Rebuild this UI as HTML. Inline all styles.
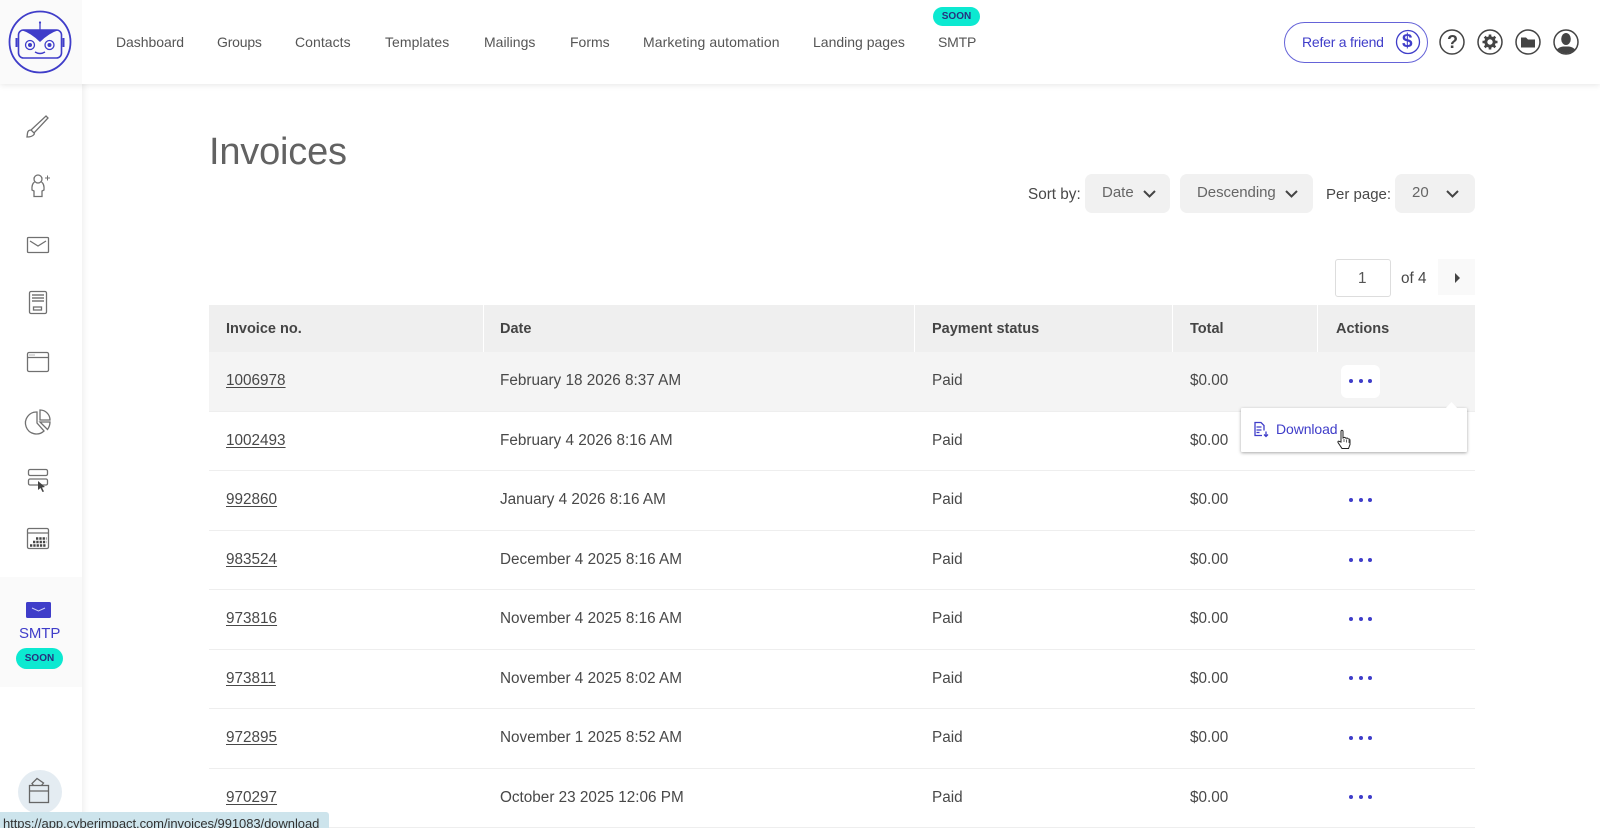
<!DOCTYPE html>
<html><head><meta charset="utf-8"><title>Invoices</title>
<style>
html,body{margin:0;padding:0;width:1600px;height:828px;overflow:hidden;background:#fff}
body{position:relative;font-family:"Liberation Sans",sans-serif;color:#444}
.t{position:absolute;white-space:nowrap;line-height:20px;font-size:15.3px;color:#484848}
.b{position:absolute}
.n{top:32px;font-size:14px;color:#555}
.h{top:319px;font-weight:bold;font-size:14.5px;color:#444}
.u{text-decoration:underline;text-underline-offset:2px}
.line{position:absolute;left:209px;width:1266px;height:1px;background:#eee}
.dots{position:absolute;left:1350px;width:20px;height:4px}
.dots i{position:absolute;top:0;width:4px;height:4px;border-radius:50%;background:#3f3dc9}
.dots i:nth-child(1){left:-1px}.dots i:nth-child(2){left:9px}.dots i:nth-child(3){left:18px}
.sel{position:absolute;top:174px;height:39px;background:#f1f1f1;border-radius:7px}
svg{position:absolute;overflow:visible}
.soon{position:absolute;background:#0ce9d1;border-radius:11px;color:#27307f;font-weight:bold;font-size:10px;text-align:center}
</style></head><body>

<!-- sidebar -->
<div class="b" style="left:0;top:0;width:82px;height:828px;background:#fff;box-shadow:2px 0 6px rgba(0,0,0,.07)"></div>
<!-- topbar -->
<div class="b" style="left:0;top:0;width:1600px;height:84px;background:#fff;box-shadow:0 1px 6px rgba(0,0,0,.1)"></div>
<div class="b" style="left:0;top:0;width:82px;height:84px;background:#fafafa"></div>

<!-- logo -->
<svg style="left:0;top:0" width="82" height="84" viewBox="0 0 82 84" fill="none" stroke="#3f3dc9">
<circle cx="40" cy="42" r="30.500" stroke-width="1.800"/>
<path d="M40 23v7" stroke-width="1.300"/><circle cx="40" cy="22.500" r="1.100" fill="#3f3dc9" stroke="none"/>
<rect x="18.500" y="30" width="43" height="28" rx="5" stroke-width="1.600"/>
<path d="M21 30h38q-10 3-19 12q-9-9-19-12z" fill="#3f3dc9" stroke="none"/>
<path d="M16.500 38v9M63.500 38v9" stroke-width="2"/>
<circle cx="30" cy="45" r="4.500" stroke-width="1.300"/><circle cx="30" cy="45" r="2" fill="#3f3dc9" stroke="none"/>
<circle cx="49.500" cy="45" r="4.500" stroke-width="1.300"/><circle cx="49.500" cy="45" r="2" fill="#3f3dc9" stroke="none"/>
<path d="M35 52q5 3 10 0" stroke-width="1.400"/>
</svg>

<!-- nav -->
<span class="t n" style="left:116px;letter-spacing:-.05px">Dashboard</span>
<span class="t n" style="left:217px;letter-spacing:-.2px">Groups</span>
<span class="t n" style="left:295px;letter-spacing:.05px">Contacts</span>
<span class="t n" style="left:385px;letter-spacing:.05px">Templates</span>
<span class="t n" style="left:484px">Mailings</span>
<span class="t n" style="left:570px">Forms</span>
<span class="t n" style="left:643px;letter-spacing:.1px">Marketing automation</span>
<span class="t n" style="left:813px">Landing pages</span>
<span class="t n" style="left:938px;letter-spacing:-.2px">SMTP</span>
<div class="soon" style="left:933px;top:7px;width:47px;height:19px;line-height:19px">SOON</div>

<!-- right top -->
<div class="b" style="left:1284px;top:22px;width:142px;height:39px;border:1px solid #6563d8;border-radius:21px"></div>
<span class="t" style="left:1302px;top:32px;font-size:14px;letter-spacing:-.22px;color:#3f3dc9">Refer a friend</span>
<svg style="left:1396px;top:30px" width="24" height="24"><circle cx="12" cy="12" r="11.500" fill="none" stroke="#3f3dc9" stroke-width="1.300"/></svg>
<span class="t" style="left:1402px;top:32px;font-size:19px;font-weight:bold;color:#3f3dc9">$</span>
<svg style="left:1439px;top:29px" width="26" height="26"><circle cx="13" cy="13" r="12" fill="none" stroke="#444" stroke-width="1.500"/></svg>
<span class="t" style="left:1447px;top:32px;font-size:18px;font-weight:bold;color:#444">?</span>
<svg style="left:1477px;top:29px" width="26" height="26" viewBox="0 0 26 26"><circle cx="13" cy="13" r="12" fill="none" stroke="#444" stroke-width="1.500"/><circle cx="13" cy="13" r="4.200" fill="none" stroke="#444" stroke-width="3"/><path d="M13 5.500v3M13 17.500v3M5.500 13h3M17.500 13h3M7.700 7.700l2.100 2.100M16.200 16.200l2.100 2.100M7.700 18.300l2.100-2.100M16.200 9.800l2.100-2.100" stroke="#444" stroke-width="2.600"/></svg>
<svg style="left:1515px;top:29px" width="26" height="26" viewBox="0 0 26 26"><circle cx="13" cy="13" r="12" fill="none" stroke="#444" stroke-width="1.500"/><path d="M6 8.500h5l2 2h7v8H6z" fill="#444"/></svg>
<svg style="left:1553px;top:29px" width="26" height="26" viewBox="0 0 26 26"><defs><clipPath id="uc"><circle cx="13" cy="13" r="11.500"/></clipPath></defs><circle cx="13" cy="13" r="12" fill="#fff" stroke="#444" stroke-width="1.500"/><g clip-path="url(#uc)" fill="#444"><ellipse cx="13" cy="10" rx="4.800" ry="6"/><path d="M2 26q0-7 8-8.500h6q8 1.500 8 8.500z"/></g></svg>

<!-- side icons -->
<svg style="left:0;top:100px" width="82" height="480" viewBox="0 100 82 480" fill="none" stroke="#707070" stroke-width="1.300">
<path d="M46 116l2 2-14 15-3-3zM31 130q-3 0-3.500 3l-.5 4q5 0 7-2.500l.5-1.500"/>
<circle cx="38" cy="179" r="4"/><path d="M34.500 182q-3 2-2.500 8l2 1v5.500h8V191l2-1q.5-6-2.500-8"/><path d="M45 178h5M47.500 175.500v5" stroke-width="1"/>
<rect x="27.500" y="237.500" width="21" height="15" rx="1"/><path d="M30 241l8 5 8-5"/>
<rect x="29.500" y="291.500" width="17" height="22" rx="1.500"/><path d="M32 295h12M32 298h12M32 301h12" stroke-width="2" stroke="#999"/><rect x="33.500" y="307" width="8" height="3"/>
<rect x="27.500" y="352.500" width="21" height="19" rx="1.500"/><path d="M27.500 357.500h21"/><path d="M29.500 355h5" stroke-dasharray="1 1" stroke-width="1"/>
<path d="M37 412a11 11 0 1 0 7 19l-7-8z"/><path d="M40 410a10 10 0 0 1 10 10H40zM40 422h10q0 4-2.500 7.500z"/>
<rect x="28.500" y="469.500" width="19" height="6" rx="1.500"/><rect x="28.500" y="479" width="19" height="6" rx="1.500"/>
<path d="M38 481l7 6-3 .5 2 4-1.500.5-2-4-2.500 2z" fill="#444" stroke="none"/>
<rect x="27.500" y="528.500" width="21" height="20" rx="1.500"/><path d="M27.500 533h21"/>
<path d="M30 545.500h16.500M33 542h13.500M36 538.500h10.500" stroke="#444" stroke-width="2.400" stroke-dasharray="2.300 1"/>
</svg>

<div class="b" style="left:0;top:577px;width:82px;height:110px;background:#fafafa"></div>
<svg style="left:26px;top:602px" width="25" height="16" viewBox="0 0 25 16"><rect width="25" height="16" rx="1.500" fill="#3f3dc9"/><path d="M6 6l6.500 3 6.500-3" fill="none" stroke="#cfcff5" stroke-width="1"/></svg>
<span class="t" style="left:19px;top:624px;font-size:15px;letter-spacing:-.1px;color:#3f3dc9">SMTP</span>
<div class="soon" style="left:16px;top:648px;width:47px;height:21px;line-height:21px">SOON</div>

<div class="b" style="left:18px;top:770px;width:44px;height:44px;border-radius:50%;background:#e4ecf2"></div>
<svg style="left:18px;top:770px" width="44" height="44" viewBox="0 0 44 44" fill="none" stroke="#666" stroke-width="1.300"><rect x="11.500" y="15.500" width="19" height="17"/><path d="M11.500 21h19M15.500 15.500l-1.500-2 5-5 6.500 4.500-2 2.500"/></svg>

<!-- heading -->
<span class="t" style="left:209px;top:129px;font-size:38px;line-height:46px;color:#626262;letter-spacing:-.2px">Invoices</span>

<!-- controls -->
<span class="t" style="left:1028px;top:185px">Sort by:</span>
<div class="sel" style="left:1085px;width:85px"></div>
<span class="t" style="left:1102px;top:183px;color:#666;font-size:15px">Date</span>
<div class="sel" style="left:1180px;width:133px"></div>
<span class="t" style="left:1197px;top:183px;color:#666;font-size:15px;letter-spacing:-.05px">Descending</span>
<span class="t" style="left:1326px;top:185px;font-size:15px">Per page:</span>
<div class="sel" style="left:1395px;width:80px"></div>
<span class="t" style="left:1412px;top:183px;color:#666;font-size:15px">20</span>
<svg style="left:1143px;top:190px" width="13" height="8" fill="none" stroke="#444" stroke-width="2"><path d="M1 1l5.500 5.500L12 1"/></svg>
<svg style="left:1285px;top:190px" width="13" height="8" fill="none" stroke="#444" stroke-width="2"><path d="M1 1l5.500 5.500L12 1"/></svg>
<svg style="left:1446px;top:190px" width="13" height="8" fill="none" stroke="#444" stroke-width="2"><path d="M1 1l5.500 5.500L12 1"/></svg>

<div class="b" style="left:1335px;top:259px;width:54px;height:36px;border:1px solid #ddd;border-radius:3px"></div>
<span class="t" style="left:1358px;top:269px;color:#555">1</span>
<span class="t" style="left:1401px;top:269px">of 4</span>
<div class="b" style="left:1438px;top:259px;width:37px;height:36px;background:#f9f9f9"></div>
<svg style="left:1455px;top:273px" width="6" height="10"><path d="M0 0l5 5-5 5z" fill="#444"/></svg>

<!-- table header -->
<div class="b" style="left:209px;top:305px;width:1266px;height:47px;background:#efefef"></div>
<div class="b" style="left:483px;top:305px;width:1px;height:47px;background:#fff"></div>
<div class="b" style="left:914px;top:305px;width:1px;height:47px;background:#fff"></div>
<div class="b" style="left:1172px;top:305px;width:1px;height:47px;background:#fff"></div>
<div class="b" style="left:1317px;top:305px;width:1px;height:47px;background:#fff"></div>
<span class="t h" style="left:226px">Invoice no.</span>
<span class="t h" style="left:500px">Date</span>
<span class="t h" style="left:932px">Payment status</span>
<span class="t h" style="left:1190px">Total</span>
<span class="t h" style="left:1336px">Actions</span>

<!-- rows -->
<div class="b" style="left:209px;top:352px;width:1266px;height:59px;background:#f4f4f4"></div>
<div class="line" style="top:411px"></div><div class="line" style="top:470px"></div><div class="line" style="top:530px"></div><div class="line" style="top:589px"></div><div class="line" style="top:649px"></div><div class="line" style="top:708px"></div><div class="line" style="top:768px"></div><div class="line" style="top:827px"></div>

<span class="t u" style="left:226px;top:371px">1006978</span><span class="t" style="left:500px;top:371px">February 18 2026 8:37 AM</span><span class="t" style="left:932px;top:371px">Paid</span><span class="t" style="left:1190px;top:371px">$0.00</span>
<span class="t u" style="left:226px;top:431px">1002493</span><span class="t" style="left:500px;top:431px">February 4 2026 8:16 AM</span><span class="t" style="left:932px;top:431px">Paid</span><span class="t" style="left:1190px;top:431px">$0.00</span>
<span class="t u" style="left:226px;top:490px">992860</span><span class="t" style="left:500px;top:490px">January 4 2026 8:16 AM</span><span class="t" style="left:932px;top:490px">Paid</span><span class="t" style="left:1190px;top:490px">$0.00</span>
<span class="t u" style="left:226px;top:550px">983524</span><span class="t" style="left:500px;top:550px">December 4 2025 8:16 AM</span><span class="t" style="left:932px;top:550px">Paid</span><span class="t" style="left:1190px;top:550px">$0.00</span>
<span class="t u" style="left:226px;top:609px">973816</span><span class="t" style="left:500px;top:609px">November 4 2025 8:16 AM</span><span class="t" style="left:932px;top:609px">Paid</span><span class="t" style="left:1190px;top:609px">$0.00</span>
<span class="t u" style="left:226px;top:669px">973811</span><span class="t" style="left:500px;top:669px">November 4 2025 8:02 AM</span><span class="t" style="left:932px;top:669px">Paid</span><span class="t" style="left:1190px;top:669px">$0.00</span>
<span class="t u" style="left:226px;top:728px">972895</span><span class="t" style="left:500px;top:728px">November 1 2025 8:52 AM</span><span class="t" style="left:932px;top:728px">Paid</span><span class="t" style="left:1190px;top:728px">$0.00</span>
<span class="t u" style="left:226px;top:788px">970297</span><span class="t" style="left:500px;top:788px">October 23 2025 12:06 PM</span><span class="t" style="left:932px;top:788px">Paid</span><span class="t" style="left:1190px;top:788px">$0.00</span>

<div class="b" style="left:1341px;top:365px;width:39px;height:33px;background:#fff;border-radius:6px"></div>
<div class="dots" style="top:379px"><i></i><i></i><i></i></div>
<div class="dots" style="top:498px"><i></i><i></i><i></i></div>
<div class="dots" style="top:558px"><i></i><i></i><i></i></div>
<div class="dots" style="top:617px"><i></i><i></i><i></i></div>
<div class="dots" style="top:676px"><i></i><i></i><i></i></div>
<div class="dots" style="top:736px"><i></i><i></i><i></i></div>
<div class="dots" style="top:795px"><i></i><i></i><i></i></div>

<!-- dropdown -->
<div class="b" style="left:1241px;top:408px;width:226px;height:44px;background:#fff;box-shadow:0 1px 3px rgba(0,0,0,.35);border-radius:1px"></div>
<svg style="left:1445px;top:402px" width="13" height="7"><path d="M0 7l6.500-7 6.500 7z" fill="#fff"/></svg>
<svg style="left:1253px;top:421px" width="16" height="17" viewBox="0 0 16 17" fill="none" stroke="#3f3dc9" stroke-width="1.300"><path d="M9 14.500H2V1.500h6l3 3v5M3.500 6h5M3.500 9h5M3.500 11.500h3M13 10.500v5M11 13.500l2 2 2-2"/></svg>
<span class="t" style="left:1276px;top:419px;font-size:14px;letter-spacing:-.1px;color:#3f3dc9">Download</span>
<svg style="left:1337px;top:429px" width="15" height="21" viewBox="0 0 15 21"><path d="M4 2q1-1.500 2 0v7l1-.5q1-.5 1.500.5l1 .2q1-.5 1.500.5l.5.3q1.500-.3 1.500 1.500v4l-1.500 4H5l-4-6q-.5-2 1.500-1L4 13z" fill="#fff" stroke="#222" stroke-width="1"/><path d="M7 10v3M9.500 10.500v3M12 11v3" stroke="#222" stroke-width=".7"/></svg>

<!-- status bar -->
<div class="b" style="left:0;top:812px;width:329px;height:16px;background:#cde4ec;border-top-right-radius:3px;overflow:hidden">
<span class="t" style="left:3px;top:2px;font-size:13px;letter-spacing:-.06px;color:#333">https://app.cyberimpact.com/invoices/991083/download</span>
</div>
</body></html>
